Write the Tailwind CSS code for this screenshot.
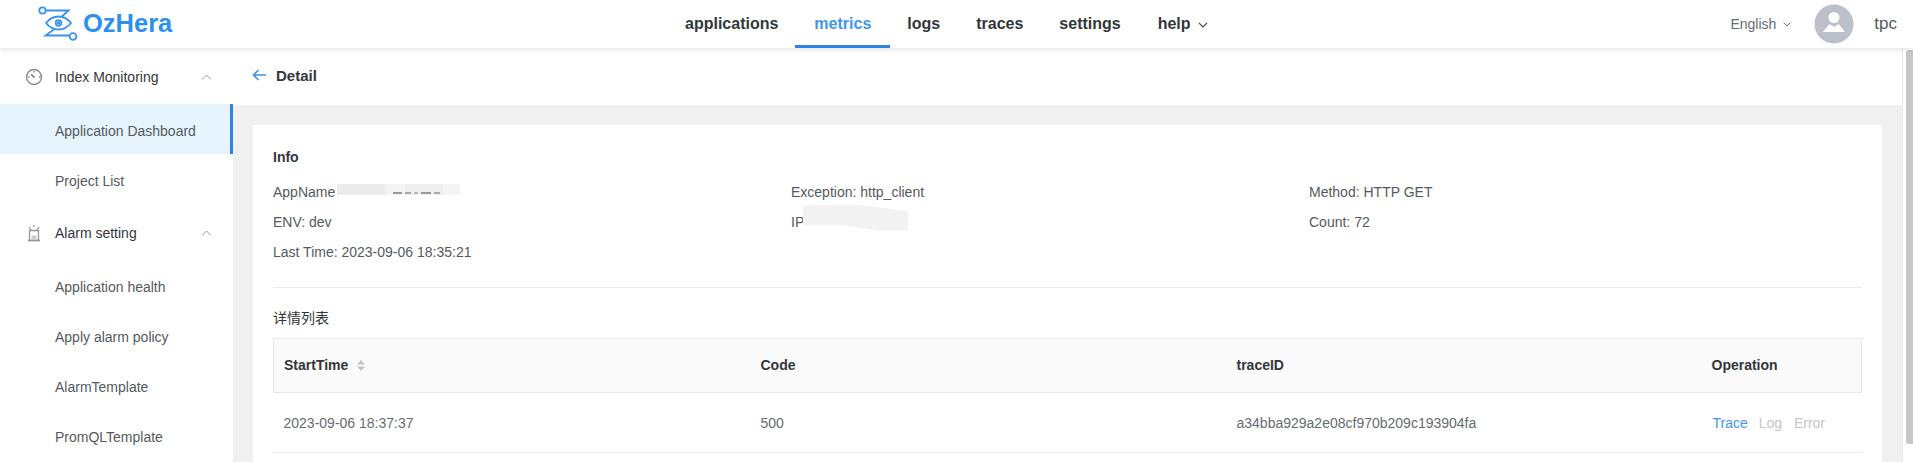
<!DOCTYPE html>
<html lang="en">
<head>
  <meta charset="UTF-8">
  <title>OzHera - Detail</title>
  <script src="https://cdn.jsdelivr.net/npm/@tailwindcss/browser@4"></script>
</head>
<body class="h-[462px] w-[1913px] overflow-hidden bg-white font-['Liberation_Sans','Noto_Sans_CJK_SC',sans-serif] text-[14px] text-[#555a60]">
  <!-- top bar -->
  <header class="relative z-10 flex h-12 items-center bg-white shadow-[0_2px_5px_rgba(0,0,0,0.1)]">
    <div class="flex w-[660px] items-center pl-[38px]">
      <svg class="h-9 w-10 text-[#3b92ee]" viewBox="38 6 40 36" fill="none" stroke="currentColor" stroke-width="1.8">
        <circle cx="42.500" cy="10.500" r="3.200"/>
        <path d="M46 10.500h22.500l-6.500 6"/>
        <path d="M46 23c3.500-4.500 7.500-6.500 12.500-6.500S67.500 18.500 71 23c-3.500 4.500-7.500 6.500-12.500 6.500S49.500 27.500 46 23z"/>
        <circle cx="58.500" cy="23" r="2.800"/>
        <circle cx="58.500" cy="23" r="0.800"/>
        <path d="M54.500 29l-9 6.500h24"/>
        <circle cx="73" cy="36.500" r="3.400"/>
      </svg>
      <span class="ml-[5px] text-[25.500px] font-bold leading-none text-[#2f8fef]">OzHera</span>
    </div>
    <nav class="flex h-12 items-center pl-[25px] text-[16px] font-bold text-[#33373b]">
      <a>applications</a>
      <a class="ml-[17px] flex h-12 items-center border-b-[3px] border-[#2f84e0] px-[19px] pt-[3px] text-[#3f97ea]">metrics</a>
      <a class="ml-[17px]">logs</a>
      <a class="ml-[36px]">traces</a>
      <a class="ml-[36px]">settings</a>
      <a class="ml-[37px] flex items-center">help
        <svg class="ml-[7px] mt-[2px] h-[6px] w-[10px]" viewBox="0 0 10 6" fill="none" stroke="#444" stroke-width="1.100"><path d="M1 1l4 4 4-4"/></svg>
      </a>
    </nav>
    <div class="ml-auto flex items-center pr-4">
      <span class="text-[#666c75]">English</span>
      <svg class="ml-[7px] mt-[1px] h-[5px] w-[8px]" viewBox="0 0 8 5" fill="none" stroke="#666c75" stroke-width="1"><path d="M0.500 0.500l3.500 3.500 3.500-3.500"/></svg>
      <svg class="ml-[23px] h-[40px] w-[40px]" viewBox="0 0 40 40">
        <circle cx="20" cy="20" r="19.500" fill="#bcc0cb"/>
        <circle cx="20" cy="13.500" r="5.500" fill="#fff"/>
        <path d="M9 28l6.500-8 4.500 3 4.500-3 6.500 8z" fill="#fff"/>
      </svg>
      <span class="ml-[20px] text-[17px] text-[#555a60]">tpc</span>
    </div>
  </header>

  <div class="flex h-[414px]">
    <!-- side menu -->
    <aside class="w-[233px] shrink-0 bg-white">
      <div class="mt-[4px] flex h-[50px] items-center text-[#33373b]">
        <svg class="ml-[25px] h-[18px] w-[18px]" viewBox="0 0 18 18" fill="none" stroke="#888" stroke-width="1.400">
          <circle cx="9" cy="9" r="7.500"/>
          <path d="M6 6.500L9.500 9.500" stroke-width="1.800"/>
          <path d="M9 3v1.500M14 9h1.500M3 9h1.500"/>
        </svg>
        <span class="ml-[12px]">Index Monitoring</span>
        <svg class="ml-auto mr-[21px] h-[6px] w-[11px]" viewBox="0 0 11 6" fill="none" stroke="#999" stroke-width="1"><path d="M1 5.500l4.500-4.500 4.500 4.500"/></svg>
      </div>
      <div class="mt-[2px] flex h-[50px] items-center border-r-[3px] border-[#2f84e0] bg-[#e6f4fd] pl-[55px] pt-[4px]">Application Dashboard</div>
      <div class="mt-[2px] flex h-[50px] items-center pl-[55px]">Project List</div>
      <div class="mt-[2px] flex h-[50px] items-center text-[#33373b]">
        <svg class="ml-[26px] h-[18px] w-[16px]" viewBox="0 0 16 18" fill="none" stroke="#999" stroke-width="1.300">
          <path d="M8 1v2M3 3l2 3M13 3l-2 3"/>
          <path d="M3.500 16V6.500h9V16" />
          <path d="M2 16.500h12" stroke-width="1.800"/>
          <path d="M5.500 15.500v-4h5v4" fill="#ccc" stroke="none"/>
        </svg>
        <span class="ml-[13px]">Alarm setting</span>
        <svg class="ml-auto mr-[21px] h-[6px] w-[11px]" viewBox="0 0 11 6" fill="none" stroke="#999" stroke-width="1"><path d="M1 5.500l4.500-4.500 4.500 4.500"/></svg>
      </div>
      <div class="mt-[4px] flex h-[50px] items-center pl-[55px]">Application health</div>
      <div class="flex h-[50px] items-center pl-[55px]">Apply alarm policy</div>
      <div class="flex h-[50px] items-center pl-[55px]">AlarmTemplate</div>
      <div class="flex h-[50px] items-center pl-[55px]">PromQLTemplate</div>
    </aside>

    <!-- content -->
    <main class="w-[1669px] shrink-0 bg-[#f0f0f0]">
      <div class="flex h-[57px] items-center bg-white pl-[19px]">
        <svg class="mb-[4px] h-3 w-[15px]" viewBox="0 0 15 12" fill="none" stroke="#3f97ea" stroke-width="1.700"><path d="M14 6H1.500M6.500 1L1.500 6l5 5"/></svg>
        <span class="ml-[9px] text-[15px] font-bold text-[#33373b]">Detail</span>
      </div>
      <section class="ml-5 mt-5 h-[400px] w-[1629px] bg-white px-5 pt-[24px]">
        <h3 class="text-[14px] font-bold leading-4 text-[#33373b]">Info</h3>
        <div class="mt-[12px] grid grid-cols-[518px_518px_1fr] auto-rows-[30px] items-center border-b border-[#ececec] pb-[20px] text-[#555a60]">
          <div class="relative">AppName
            <!-- blurred-out value -->
            <span class="absolute left-[64px] top-[2px] flex h-[11px] w-[123px]">
              <i class="w-[48px] bg-[#ebebeb]"></i>
              <i class="w-[20px] bg-[#f4f4f4]"></i>
              <i class="w-[38px] bg-[#efefef]"></i>
              <i class="w-[17px] bg-[#f4f4f4]"></i>
            </span>
            <span class="absolute left-[120px] top-[10px] flex gap-[3px]">
              <i class="h-[2px] w-[9px] bg-[#999]"></i>
              <i class="h-[2px] w-[6px] bg-[#aaa]"></i>
              <i class="h-[2px] w-[4px] bg-[#bbb]"></i>
              <i class="h-[2px] w-[10px] bg-[#999]"></i>
              <i class="h-[2px] w-[6px] bg-[#aaa]"></i>
            </span>
          </div>
          <div>Exception: http_client</div>
          <div>Method: HTTP GET</div>
          <div>ENV: dev</div>
          <div class="relative">IP
            <span class="absolute left-[12px] top-[-7px] h-[26px] w-[105px] bg-[#f3f3f3] [clip-path:polygon(0_0,50%_0,100%_25%,100%_100%,70%_100%,40%_80%,0_80%)]"></span>
          </div>
          <div>Count: 72</div>
          <div class="col-span-3">Last Time: 2023-09-06 18:35:21</div>
        </div>
        <h4 class="mt-[22px] text-[14px] leading-4 text-[#33373b]">详情列表</h4>
        <table class="mt-[12px] w-[1589px] table-fixed border-collapse">
          <thead>
            <tr class="h-[54px] border border-[#e8e8e8] bg-[#fafafa] text-left font-bold text-[#33373b]">
              <th class="w-[477px] pl-[10px]">
                <span class="flex items-center">StartTime
                  <svg class="ml-2 h-[11px] w-[10px]" viewBox="0 0 10 11" fill="#c0c4cc"><path d="M5 0l4 4.500H1zM5 11L1 6.500h8z"/></svg>
                </span>
              </th>
              <th class="w-[476px] pl-[10px]">Code</th>
              <th class="w-[475px] pl-[10px]">traceID</th>
              <th class="pl-[10px]">Operation</th>
            </tr>
          </thead>
          <tbody>
            <tr class="h-[60px] border-b border-[#ececec] text-[#666c70]">
              <td class="pl-[10px] pt-[1px]">2023-09-06 18:37:37</td>
              <td class="pl-[10px] pt-[1px]">500</td>
              <td class="pl-[10px] pt-[1px]">a34bba929a2e08cf970b209c193904fa</td>
              <td class="pl-[11px] pt-[1px]">
                <span class="text-[#3f97ea]">Trace</span>
                <span class="ml-[7px] text-[#c4c6ca]">Log</span>
                <span class="ml-[8px] text-[#c4c6ca]">Error</span>
              </td>
            </tr>
          </tbody>
        </table>
      </section>
    </main>

    <!-- page scrollbar -->
    <div class="w-[11px] shrink-0 border-l border-[#e8e8e8] bg-white pl-[3px] pt-[2px]">
      <div class="h-[394px] rounded-l-[3px] bg-[#c6c6c6]"></div>
    </div>
  </div>
</body>
</html>
